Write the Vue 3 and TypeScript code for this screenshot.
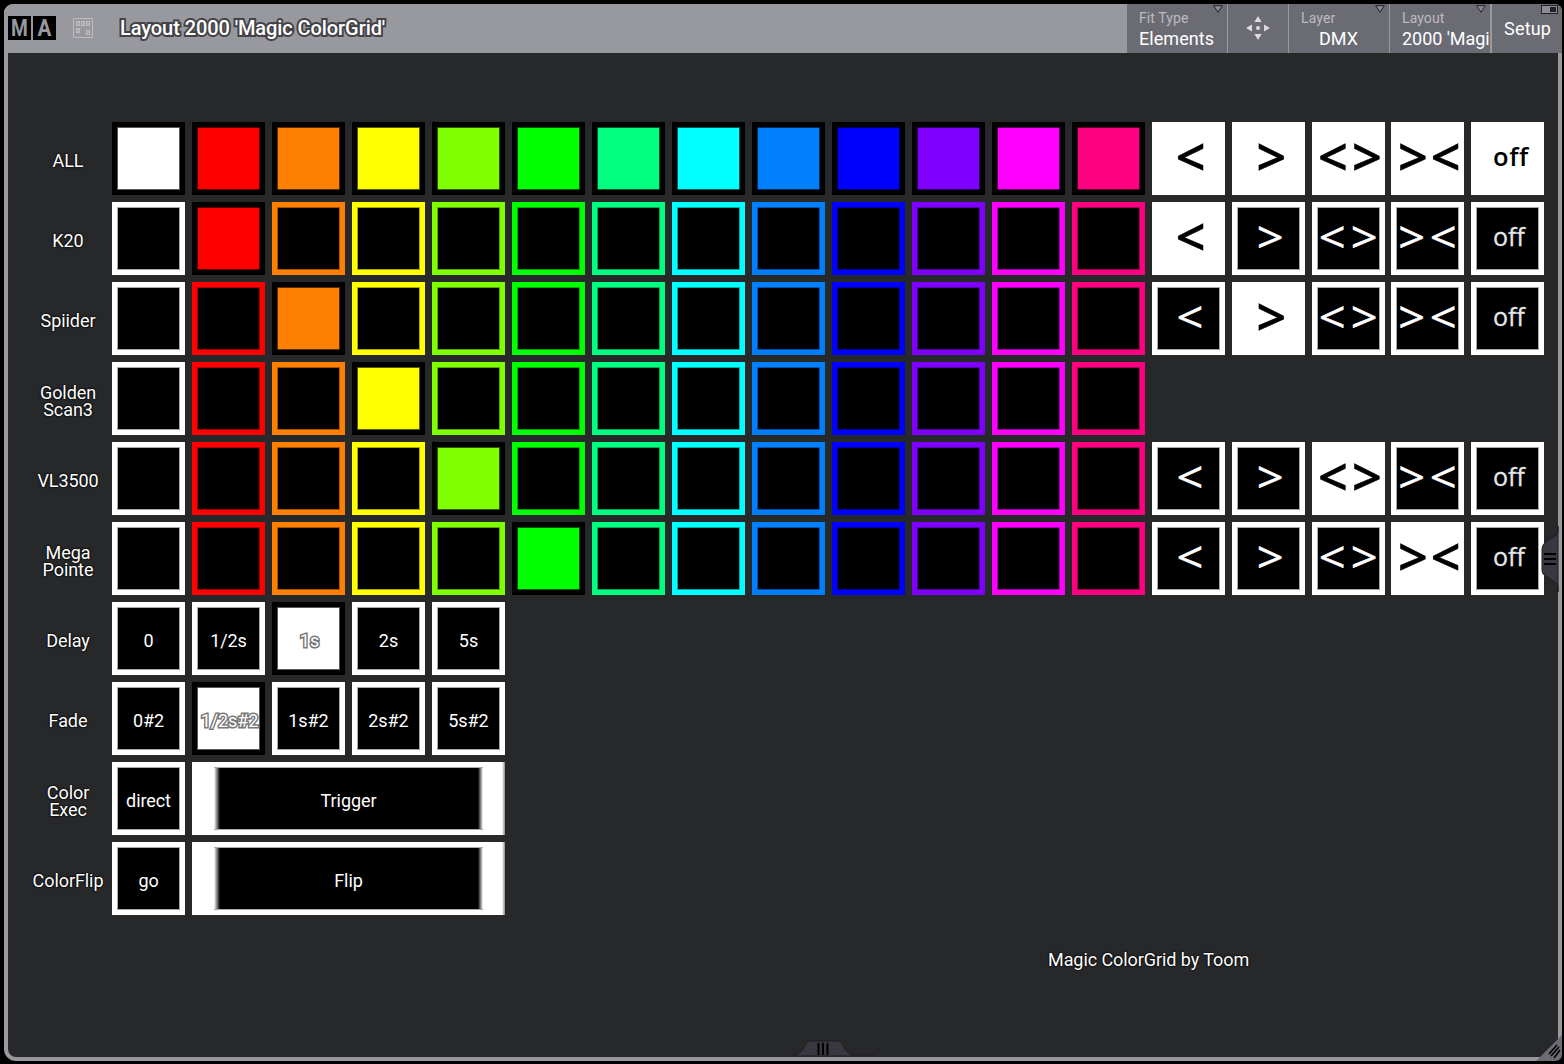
<script setup lang="ts">
interface Arrow {
  glyphs: string
  on: string
  off: string
}

interface Row {
  label: string[]
  active: number
  arrow: number | 'all' | null
}

const colors: string[] = [
  '#ffffff', '#ff0000', '#ff8000', '#ffff00', '#80ff00', '#00ff00', '#00ff80',
  '#00ffff', '#0080ff', '#0000ff', '#8000ff', '#ff00ff', '#ff0080',
]

const arrows: Arrow[] = [
  { glyphs: '<', off: '24.4', on: '23.7' },
  { glyphs: '>', off: '24.8', on: '24.4' },
  { glyphs: '<>', off: '6.8 38.8', on: '6 40' },
  { glyphs: '><', off: '7.2 38.7', on: '7 39.7' },
]

const rows: Row[] = [
  { label: ['ALL'], active: -1, arrow: 'all' },
  { label: ['K20'], active: 1, arrow: 0 },
  { label: ['Spiider'], active: 2, arrow: 1 },
  { label: ['Golden', 'Scan3'], active: 3, arrow: null },
  { label: ['VL3500'], active: 4, arrow: 2 },
  { label: ['Mega', 'Pointe'], active: 5, arrow: 3 },
]

const timing = [
  { label: 'Delay', active: 2, values: ['0', '1/2s', '1s', '2s', '5s'] },
  { label: 'Fade', active: 1, values: ['0#2', '1/2s#2', '1s#2', '2s#2', '5s#2'] },
]

const actions = [
  { label: ['Color', 'Exec'], small: 'direct', wide: 'Trigger' },
  { label: ['ColorFlip'], small: 'go', wide: 'Flip' },
]

const isLit = (row: Row, i: number): boolean => row.active === -1 || row.active === i
const arrowOn = (row: Row, i: number): boolean => row.arrow === 'all' || row.arrow === i
</script>

<template>
  <div class="screen">
    <div class="window">
      <header class="bar">
        <div class="logo"><span>M</span><span>A</span></div>
        <svg class="layout-icon" width="20" height="20" viewBox="0 0 20 20" fill="#a9a9ad" stroke="#bdbdc1">
          <rect x="0.5" y="0.5" width="19" height="19" rx="0.5" fill="none" />
          <rect x="3.5" y="3.5" width="3" height="4" />
          <rect x="8.5" y="3.5" width="3" height="4" />
          <rect x="13.5" y="3.5" width="3" height="4" />
          <rect x="3.5" y="10.5" width="3" height="4" />
          <rect x="13.5" y="12.5" width="3" height="4" />
        </svg>
        <h1 class="title">Layout 2000 'Magic ColorGrid'</h1>
        <div class="tools">
          <div class="tool fit">
            <small>Fit Type</small><b>Elements</b>
            <svg class="caret" width="10" height="8" viewBox="0 0 10 8"><path d="M0.7 0.7H9.3L5 7.2Z" fill="#8c8c93" stroke="#222226" /></svg>
          </div>
          <div class="tool move">
            <svg width="24" height="26" viewBox="0 0 24 26" fill="#dcdcde">
              <path d="M12 1L15.6 7H8.4ZM12 25L15.6 19H8.4ZM0 13L6 9.4V16.6ZM24 13L18 9.4V16.6Z" />
              <circle cx="12" cy="13" r="2" />
            </svg>
          </div>
          <div class="tool layer">
            <small>Layer</small><b>DMX</b>
            <svg class="caret" width="10" height="8" viewBox="0 0 10 8"><path d="M0.7 0.7H9.3L5 7.2Z" fill="#8c8c93" stroke="#222226" /></svg>
          </div>
          <div class="tool lay">
            <small>Layout</small><b>2000 'Magi</b>
            <svg class="caret" width="10" height="8" viewBox="0 0 10 8"><path d="M0.7 0.7H9.3L5 7.2Z" fill="#8c8c93" stroke="#222226" /></svg>
          </div>
          <div class="tool setup">
            <b>Setup</b>
            <svg class="pin" width="17" height="9" viewBox="0 0 17 9"><rect x="0.5" y="0.5" width="16" height="8" fill="#8c8c93" stroke="#222226" /><rect x="9" y="2" width="6" height="5" fill="#222226" /></svg>
          </div>
        </div>
      </header>

      <main class="grid">
        <div v-for="row in rows" :key="row.label[0]" class="row">
          <div class="label"><span v-for="l in row.label" :key="l">{{ l }}</span></div>
          <div
            v-for="(c, i) in colors"
            :key="c"
            class="cell"
            :class="{ lit: isLit(row, i) }"
            :style="{ '--c': c }"
          ></div>
          <template v-if="row.arrow !== null">
            <div
              v-for="(a, i) in arrows"
              :key="a.glyphs"
              class="cell arrow"
              :class="{ full: arrowOn(row, i), tight: i === 3 }"
            >
              <svg width="73" height="73" viewBox="0 0 73 73">
                <text v-if="arrowOn(row, i)" :x="a.on" y="54">{{ a.glyphs }}</text>
                <text v-else :x="a.off" y="16.8" transform="translate(0 35.7) scale(1 0.93)">{{ a.glyphs }}</text>
              </svg>
            </div>
            <div class="cell arrow" :class="{ full: row.arrow === 'all' }">
              <svg width="73" height="73" viewBox="0 0 73 73"><text class="off" x="22" y="43.5">off</text></svg>
            </div>
          </template>
        </div>

        <div v-for="t in timing" :key="t.label" class="row">
          <div class="label"><span>{{ t.label }}</span></div>
          <div v-for="(v, i) in t.values" :key="v" class="cell" :class="{ lit: t.active === i }">
            <span class="value">{{ v }}</span>
          </div>
        </div>

        <div v-for="a in actions" :key="a.small" class="row">
          <div class="label"><span v-for="l in a.label" :key="l">{{ l }}</span></div>
          <div class="cell"><span class="value">{{ a.small }}</span></div>
          <div class="wide"><div class="wide-face"><span class="value">{{ a.wide }}</span></div></div>
        </div>

        <p class="credit">Magic ColorGrid by Toom</p>
      </main>

      <svg class="handle-right" width="18" height="66" viewBox="0 0 18 66">
        <path d="M17 0V5C17 9 12 11 8 14C3 17 1 19 1 24V43C1 48 3 50 8 52C12 55 17 57 17 61V66Z" fill="#383841" stroke="#1c1c20" />
        <path d="M3 28H15M3 33H15M3 38H15" stroke="#000" stroke-width="2" />
      </svg>
      <svg class="handle-bottom" width="82" height="16" viewBox="0 0 82 16">
        <path d="M0 15C6 15 8 12 11 7C14 2 15 1 19 1H43C47 1 49 3 51 7C54 12 56 15 62 15H82V16H0Z" fill="#383841" stroke="#1c1c20" />
        <path d="M25.500 3V15M30 3V15M34.500 3V15" stroke="#000" stroke-width="2" />
      </svg>
      <svg class="corner" width="26" height="26" viewBox="0 0 26 26">
        <path d="M26 0V19Q26 26 19 26H0Z" fill="#6c6c74" />
        <path d="M13 19L21 10M15 21L23 12M18 23L24 15" stroke="#000" stroke-width="1.6" />
      </svg>
    </div>
  </div>
</template>

<style>
html,
body {
  margin: 0;
  background: #000;
}
</style>

<style scoped>
.screen {
  width: 1564px;
  height: 1064px;
  box-sizing: border-box;
  padding: 4px 2px 3px 4px;
  overflow: hidden;
  background: #000;
  color: #fff;
  font-family: Roboto, 'Liberation Sans', sans-serif;
  font-size: 18px;
}

.window {
  position: relative;
  height: 1057px;
  box-sizing: border-box;
  border: solid #98989d;
  border-width: 0 4px 4px;
  border-radius: 9px 8px 12px 12px;
  background: #27282a;
}

.bar {
  display: flex;
  align-items: center;
  height: 49px;
  margin: 0 -4px;
  padding-left: 4px;
  border-radius: 9px 8px 0 0;
  background: #98999e;
  overflow: hidden;
}

.logo {
  display: flex;
  gap: 2px;
  margin-top: -1px;
  background: linear-gradient(90deg, #000 23px, transparent 23px, transparent 25px, #000 25px);
}

.logo span {
  width: 23px;
  height: 24px;
  color: #98999e;
  font: 700 24px/25px Roboto, sans-serif;
  text-align: center;
  transform: scaleX(0.86);
}

.logo span:first-child {
  transform: scaleX(0.8);
}

.layout-icon {
  margin: -1px 0 0 17px;
}

.title {
  margin: -2px 0 0 27px;
  font-size: 20px;
  font-weight: 500;
  line-height: 24px;
  letter-spacing: -0.08px;
  -webkit-text-stroke: 4px #434347;
  paint-order: stroke fill;
}

.tools {
  display: flex;
  height: 49px;
  margin-left: auto;
}

.tool {
  position: relative;
  box-sizing: border-box;
  background: #6b6b74;
  border-right: 1px solid #98999e;
  padding: 5px 0 0 12px;
  overflow: hidden;
}

.tool small,
.tool b {
  display: block;
  white-space: nowrap;
  font-weight: 400;
}

.tool small {
  color: #bbbbc0;
  font-size: 14px;
  line-height: 18px;
  letter-spacing: 0.1px;
}

.tool b {
  font-size: 18px;
  line-height: 23px;
  letter-spacing: 0.05px;
}

.fit { width: 101px; }
.move { width: 61px; padding: 11px 0 0 18px; }
.layer { width: 101px; }
.layer b { text-align: center; padding-right: 13px; }
.lay { width: 102px; border-right-width: 2px; }
.lay b { letter-spacing: -0.05px; }
.setup { width: 70px; border: 0; padding-top: 13px; }
.setup b { letter-spacing: 0.2px; }

.caret {
  position: absolute;
  top: 1px;
  right: 4px;
}

.pin {
  position: absolute;
  top: 1px;
  right: 4px;
}

.grid {
  display: flex;
  flex-direction: column;
  gap: 7px;
  padding: 69px 0 0 24px;
}

.row {
  display: flex;
  gap: 7px;
  height: 73px;
}

.label {
  display: flex;
  flex-direction: column;
  align-items: center;
  justify-content: center;
  box-sizing: border-box;
  width: 73px;
  height: 77px;
  padding-right: 1px;
  line-height: 17px;
  text-shadow: 0 0 2px #000, 0 0 2px #000;
}

.label span,
.value,
.credit {
  letter-spacing: -0.07px;
  white-space: nowrap;
}

.cell {
  --c: #fff;
  display: flex;
  align-items: center;
  justify-content: center;
  box-sizing: border-box;
  width: 73px;
  height: 73px;
  border: 5px solid var(--c);
  background: #000;
  box-shadow: inset 0 0 0 1px color-mix(in srgb, var(--c) 66%, #000);
}

.cell.lit {
  border-color: #000;
  background: var(--c);
  box-shadow: inset 0 0 0 1px color-mix(in srgb, var(--c) 35%, #000);
}

.cell.full {
  background: #fff;
  box-shadow: none;
}

.cell.tight {
  margin-left: -1px;
}

.cell svg {
  flex: none;
  overflow: visible;
}

.arrow text {
  fill: #fff;
  stroke: #fff;
  stroke-width: 0.5px;
  font-family: 'Open Sans', sans-serif;
  font-size: 47px;
}

.arrow.full text {
  fill: #000;
  stroke: #000;
  font-size: 52px;
  font-weight: 600;
}

.arrow text.off {
  font-size: 25px;
  fill: #e6e6e6;
  stroke: #e6e6e6;
  stroke-width: 0.3px;
}

.arrow.full text.off {
  font-size: 25.500px;
  letter-spacing: 0.6px;
  fill: #000;
  stroke: none;
}

.value {
  position: relative;
  top: 2px;
  line-height: 20px;
}

.lit .value {
  left: 1px;
  -webkit-text-stroke: 3px #777;
  paint-order: stroke fill;
}

.wide {
  display: flex;
  box-sizing: border-box;
  width: 313px;
  height: 73px;
  padding: 5px 22px;
  background: linear-gradient(90deg, #fff 310px, #888 313px);
}

.wide-face {
  display: flex;
  flex: 1;
  align-items: center;
  justify-content: center;
  box-sizing: border-box;
  border: solid #aaa;
  border-width: 1px 0;
  background: linear-gradient(90deg, #fff, #000 6px, #000 calc(100% - 5px), #fff);
}

.credit {
  margin: 27px 0 0 1016px;
  line-height: 22px;
  text-shadow: 0 0 2px #000, 0 0 2px #000;
}

.handle-right {
  position: absolute;
  right: -1px;
  top: 522px;
}

.handle-bottom {
  position: absolute;
  left: 785px;
  bottom: 1px;
}

.corner {
  position: absolute;
  right: -4px;
  bottom: -4px;
}
</style>
